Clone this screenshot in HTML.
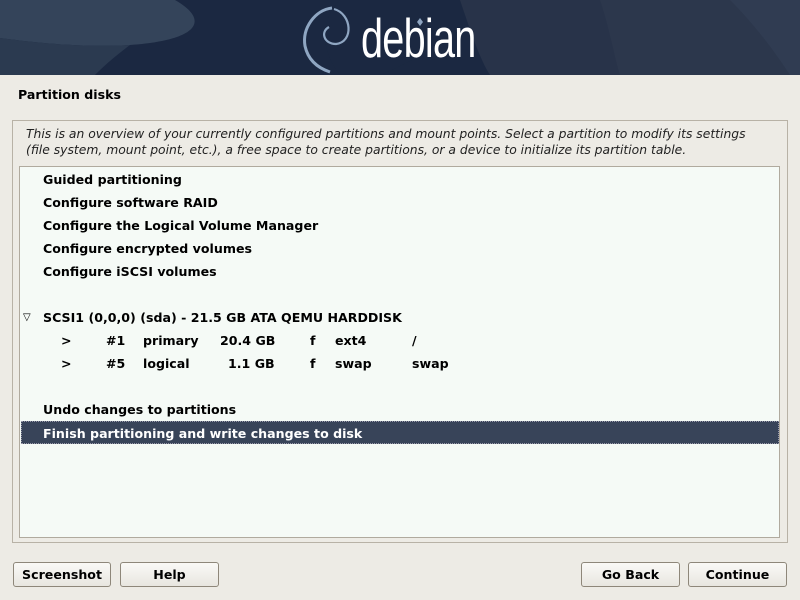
<!DOCTYPE html>
<html><head><style>
*{margin:0;padding:0;box-sizing:border-box}
body{width:800px;height:600px;background:#edebe5;font-family:"DejaVu Sans","Liberation Sans",sans-serif;font-size:12.6px;color:#000;position:relative;overflow:hidden}
.hdr{position:absolute;left:0;top:0;width:800px;height:75px;background:#1b2841;overflow:hidden}
.title{position:absolute;left:18px;top:87px;font-weight:bold}
.frame{position:absolute;left:12px;top:120px;width:776px;height:423px;border:1px solid #b8b2a6;background:#edebe5}
.desc{position:absolute;left:26px;top:126px;font-style:italic;font-size:12.35px;line-height:16px;color:#222}
.list{position:absolute;left:19px;top:166px;width:761px;height:372px;border:1px solid #b0aa9e;background:#f5faf6}
.row{position:absolute;left:0;height:23px;line-height:23px;font-weight:bold;white-space:pre}
.sel{left:1px;width:758px;background:#384459;color:#fff;border:1px dotted #99a;top:254px}
.btn{position:absolute;top:562px;height:25px;border:1px solid #8e877a;border-radius:3px;background:linear-gradient(#faf9f6,#e8e6e0);font-weight:bold;text-align:center;line-height:23px}
</style></head><body>
<div class="hdr">
<svg width="800" height="75" style="position:absolute;left:0;top:0">
<rect width="800" height="75" fill="#1b2841"/>
<path d="M0 0H175C210 20 200 40 130 45C80 48 30 42 0 38Z" fill="#34445a"/>
<path d="M0 38C30 42 80 48 130 45C110 60 100 70 95 75H0Z" fill="#2b3a50"/>
<path d="M520 0C470 20 440 50 380 75H340C320 50 320 20 340 0Z" fill="#1b2841"/>
<path d="M460 0C470 30 480 60 490 75H800V0Z" fill="#283349"/>
<path d="M600 0C610 30 615 60 620 75H800V0Z" fill="#2c374c"/>
<path d="M730 0C760 30 780 60 790 75H800V0Z" fill="#303c52"/>
<path d="M332 8C315 10 302 28 305 46C308 60 318 68 330 72" fill="none" stroke="#8fa6c2" stroke-width="3"/>
<path d="M334 9C352 14 354 42 336 44C324 44 320 32 329 27" fill="none" stroke="#8fa6c2" stroke-width="2.2"/>
<path d="M420 18l3 4-3 4-3-4z" fill="#8fa6c2"/>
</svg>
<div style="position:absolute;left:361px;top:6px;font-family:'Liberation Sans Narrow','Liberation Sans',sans-serif;font-size:55px;color:#fff;transform:scaleX(0.72);transform-origin:left;letter-spacing:-1px">debian</div>
</div>
<div class="title">Partition disks</div>
<div class="frame"></div>
<div class="desc">This is an overview of your currently configured partitions and mount points. Select a partition to modify its settings<br>(file system, mount point, etc.), a free space to create partitions, or a device to initialize its partition table.</div>
<div class="list">
<div class="row" style="top:1px;left:23px">Guided partitioning</div>
<div class="row" style="top:24px;left:23px">Configure software RAID</div>
<div class="row" style="top:47px;left:23px">Configure the Logical Volume Manager</div>
<div class="row" style="top:70px;left:23px">Configure encrypted volumes</div>
<div class="row" style="top:93px;left:23px">Configure iSCSI volumes</div>
<div class="row" style="top:139px;left:3px;font-weight:normal;font-size:10px">▽</div>
<div class="row" style="top:139px;left:23px">SCSI1 (0,0,0) (sda) - 21.5 GB ATA QEMU HARDDISK</div>
<div class="row" style="top:162px;left:41px">&gt;</div><div class="row" style="top:162px;left:86px">#1</div><div class="row" style="top:162px;left:123px">primary</div><div class="row" style="top:162px;left:200px">20.4 GB</div><div class="row" style="top:162px;left:290px">f</div><div class="row" style="top:162px;left:315px">ext4</div><div class="row" style="top:162px;left:392px">/</div>
<div class="row" style="top:185px;left:41px">&gt;</div><div class="row" style="top:185px;left:86px">#5</div><div class="row" style="top:185px;left:123px">logical</div><div class="row" style="top:185px;left:208px">1.1 GB</div><div class="row" style="top:185px;left:290px">f</div><div class="row" style="top:185px;left:315px">swap</div><div class="row" style="top:185px;left:392px">swap</div>
<div class="row" style="top:231px;left:23px">Undo changes to partitions</div>
<div class="row sel"><span style="padding-left:21px">Finish partitioning and write changes to disk</span></div>
</div>
<div class="btn" style="left:13px;width:98px">Screenshot</div>
<div class="btn" style="left:120px;width:99px">Help</div>
<div class="btn" style="left:581px;width:99px">Go Back</div>
<div class="btn" style="left:688px;width:99px">Continue</div>
</body></html>
